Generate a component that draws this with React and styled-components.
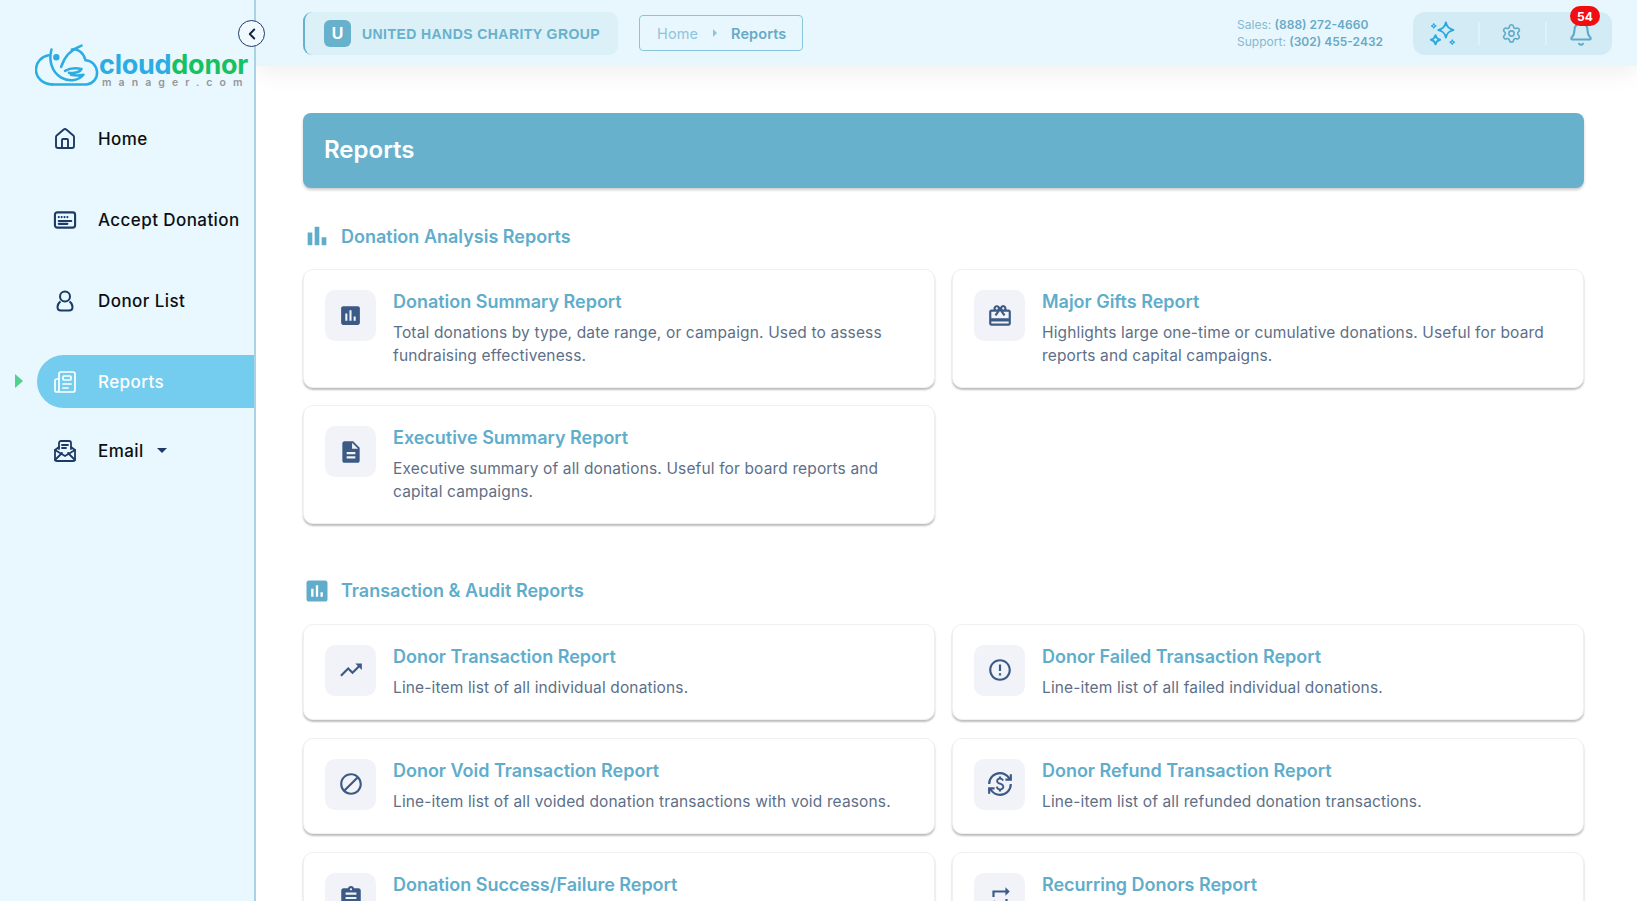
import React from 'react';
import styled, { createGlobalStyle } from 'styled-components';
import { House, Newspaper, ChevronLeft, Settings, Bell } from 'lucide-react';
import {
  MdBarChart,
  MdAssessment,
  MdDescription,
  MdOutlineCardGiftcard,
  MdTrendingUp,
  MdErrorOutline,
  MdBlock,
  MdOutlineCurrencyExchange,
  MdAssignment,
  MdRepeat,
} from 'react-icons/md';

const GlobalStyle = createGlobalStyle`
  html, body {
    margin: 0;
    height: 100%;
    overflow: hidden;
    background: #fff;
    font-family: Inter, "Noto Sans", sans-serif;
  }
  * { box-sizing: border-box; }
`;

const Shell = styled.div`
  display: flex;
  width: 100%;
  height: 901px;
  overflow: hidden;
`;

const Sidebar = styled.aside`
  position: relative;
  flex: 0 0 256px;
  height: 100%;
  padding-top: 44px;
  background: #e8f8fe;
  border-right: 2px solid #a9d2e5;
  z-index: 3;
`;

const Toggle = styled.button`
  position: absolute;
  top: 20px;
  left: 238px;
  width: 27px;
  height: 27px;
  padding: 0;
  display: flex;
  align-items: center;
  justify-content: center;
  color: #14243f;
  background: #f0fafe;
  border: 1.5px solid #1d3a66;
  border-radius: 50%;
`;

const Logo = styled.div`
  display: flex;
  align-items: flex-start;
  height: 44px;
  margin-left: 35px;
`;

const LogoText = styled.div`
  margin: 9px 0 0 0;
`;

const LogoName = styled.div`
  font-size: 27px;
  font-weight: 700;
  line-height: 23px;
  letter-spacing: -0.25px;
  color: #2bace2;

  span {
    color: #17c161;
  }
`;

const LogoSub = styled.div`
  margin: 2px 0 0 3px;
  font-size: 10.5px;
  font-weight: 600;
  line-height: 9px;
  letter-spacing: 7.1px;
  color: #94969c;
`;

const Nav = styled.nav`
  margin-top: 24px;
`;

const NavItem = styled.a`
  position: relative;
  display: flex;
  align-items: center;
  gap: 21px;
  height: 53px;
  margin: ${p => (p.$tight ? '16px' : '28px')} 0 0 37px;
  padding-left: 16px;
  font-size: 17px;
  font-weight: 500;
  letter-spacing: 0.42px;
  color: ${p => (p.$active ? '#fff' : '#0e0e12')};
  background: ${p => (p.$active ? '#74cdef' : 'transparent')};
  border-radius: 27px 0 0 27px;

  &:first-child {
    margin-top: 0;
  }

  svg {
    flex: none;
    color: ${p => (p.$active ? '#fff' : '#1d3a66')};
  }
`;

const ActiveMarker = styled.span`
  position: absolute;
  left: -22px;
  top: 19px;
  border-left: 8px solid #52d18d;
  border-top: 7.5px solid transparent;
  border-bottom: 7.5px solid transparent;
`;

const Caret = styled.span`
  margin-left: -8px;
  border-top: 5px solid #1d3a66;
  border-left: 5px solid transparent;
  border-right: 5px solid transparent;
`;

const Column = styled.div`
  flex: 1;
  min-width: 0;
  display: flex;
  flex-direction: column;
`;

const Header = styled.header`
  position: relative;
  z-index: 2;
  flex: 0 0 66px;
  display: flex;
  align-items: flex-start;
  padding: 12px 25px 0 47px;
  background: #e8f7fd;
  box-shadow: 0 8px 22px rgba(0, 0, 0, 0.06);
`;

const OrgPill = styled.div`
  display: flex;
  align-items: center;
  gap: 11px;
  width: 315px;
  height: 43px;
  padding-left: 19px;
  background: #dbf0f7;
  border-left: 2px solid #68b1cc;
  border-radius: 9px;
`;

const OrgBadge = styled.span`
  width: 27px;
  height: 27px;
  display: flex;
  align-items: center;
  justify-content: center;
  font-family: "Liberation Sans", Arial, sans-serif;
  font-size: 16px;
  font-weight: 700;
  color: #fff;
  background: #68b1cc;
  border-radius: 6px;
`;

const OrgName = styled.span`
  font-family: "Liberation Sans", Arial, sans-serif;
  font-size: 14px;
  font-weight: 700;
  letter-spacing: 0.43px;
  white-space: nowrap;
  color: #68b1cc;
`;

const Crumbs = styled.div`
  display: flex;
  align-items: center;
  width: 164px;
  height: 36px;
  margin: 3px 0 0 21px;
  padding-left: 17px;
  font-size: 14.5px;
  letter-spacing: 0.1px;
  color: #8fc4da;
  border: 1.5px solid #8ac5db;
  border-radius: 4px;
`;

const CrumbArrow = styled.span`
  margin: 0 14px 0 15px;
  border-left: 4px solid #8fc4da;
  border-top: 4px solid transparent;
  border-bottom: 4px solid transparent;
`;

const CrumbCurrent = styled.strong`
  font-weight: 600;
  color: #68a9c6;
`;

const Contact = styled.div`
  margin: 4px 30px 0 auto;
  font-size: 12px;
  line-height: 17px;
  white-space: nowrap;
  color: #86b8d0;

  strong {
    font-weight: 600;
    color: #68a9c6;
  }
`;

const Tools = styled.div`
  position: relative;
  display: grid;
  grid-template-columns: 65px 67px 67px;
  width: 199px;
  height: 43px;
  background: #d2ebf5;
  border-radius: 12px;
`;

const Tool = styled.div`
  display: flex;
  align-items: center;
  justify-content: center;
  padding: ${p => p.$nudge || '0'};
  color: #5fa9cb;
  border-left: ${p => (p.$first ? 'none' : '2px')} solid #def2f9;
  border-image: linear-gradient(transparent 25%, #def2f9 25%, #def2f9 75%, transparent 75%) 1;
`;

const Badge = styled.span`
  position: absolute;
  top: -6px;
  right: 12px;
  width: 30px;
  height: 20px;
  display: flex;
  align-items: center;
  justify-content: center;
  font-size: 12px;
  font-weight: 700;
  color: #fff;
  background: #f20d12;
  border-radius: 10px;
`;

const Content = styled.main`
  padding: 47px 53px 0 47px;
`;

const Banner = styled.div`
  display: flex;
  align-items: center;
  height: 75px;
  padding: 0 0 2px 21px;
  font-size: 24px;
  font-weight: 600;
  color: #fff;
  background: #68b1cc;
  border-radius: 8px;
  box-shadow: 0 2px 3px rgba(0, 0, 0, 0.2);
`;

const SectionTitle = styled.h2`
  display: flex;
  align-items: center;
  gap: 10px;
  height: 24px;
  margin: ${p => (p.$first ? '36px' : '54.5px')} 0 21px;
  font-size: 18px;
  font-weight: 600;
  color: #5fadcb;

  svg {
    flex: none;
  }
`;

const CardGrid = styled.div`
  display: grid;
  grid-template-columns: 1fr 1fr;
  column-gap: 17px;
  row-gap: ${p => (p.$wide ? '17.5px' : '17px')};
`;

const Card = styled.article`
  display: flex;
  gap: 17px;
  padding: 20px 20px 20px 21px;
  background: #fff;
  border: 1px solid #eef0f3;
  border-radius: 10px;
  box-shadow: 0 2px 2px rgba(0, 0, 0, 0.26);
`;

const IconBox = styled.div`
  flex: 0 0 51px;
  height: 51px;
  display: flex;
  align-items: center;
  justify-content: center;
  color: #3b5a85;
  background: #f1f3f8;
  border-radius: 10px;
`;

const CardTitle = styled.h3`
  margin: 0;
  font-size: 18px;
  font-weight: 600;
  line-height: 24px;
  letter-spacing: -0.02px;
  color: #5fadcb;
`;

const CardText = styled.p`
  margin: 8px 0 0;
  font-size: 15.5px;
  font-weight: 400;
  line-height: 22.5px;
  letter-spacing: 0.14px;
  color: #5d6f88;
`;

const Cloud = () => (
  <svg width="64" height="43" viewBox="0 0 66 43" fill="none" stroke="#2bace2" strokeWidth="2.6" strokeLinecap="round" strokeLinejoin="round">
    <path d="M18 41H53a12 12 0 0 0 11-13c-1-7-6-12-12-12C50 8 44 4 38 5" />
    <path d="M18 41C8 41 1 34 1 26c0-8 6-14 13-15" />
    <path d="M17 5c-3 11 0 23 10 29 7 4 17 4 23-3-4 1-9 1-13 0" />
    <path d="M27 23C30 13 37 5 48 1" />
    <path d="M31 27c5-3 11-3 17-2-1 3-7 5-13 4" />
    <circle cx="22" cy="13" r="2" fill="#2bace2" />
  </svg>
);

const CardIcon = () => (
  <svg width="24" height="24" viewBox="0 0 25 24" fill="none" stroke="currentColor" strokeWidth="2.2">
    <rect x="2" y="4" width="21" height="16" rx="2.5" />
    <path d="M6 9h.01M9 9h.01M12 9h.01M15 9h.01M6 13h13M6 16h9" strokeLinecap="round" />
  </svg>
);

const PersonIcon = () => (
  <svg width="24" height="24" viewBox="0 0 24 24" fill="none" stroke="currentColor" strokeWidth="2">
    <ellipse cx="12" cy="7.5" rx="5" ry="5" />
    <path d="M7.5 12.5C5.5 14 4.500 16 4.500 18c0 2 1.500 3.500 3.500 3.500h8c2 0 3.500-1.500 3.500-3.500 0-2-1-4-3-5.500" />
  </svg>
);

const MailIcon = () => (
  <svg width="24" height="24" viewBox="0 0 24 24" fill="none" stroke="currentColor" strokeWidth="1.8" strokeLinejoin="round" strokeLinecap="round">
    <path d="M6 10V4a2 2 0 0 1 2-2h8a2 2 0 0 1 2 2v6" />
    <path d="M9 6h6M9 9h4" />
    <path d="M6 8l-4 3v9a2 2 0 0 0 2 2h16a2 2 0 0 0 2-2v-9l-4-3" />
    <path d="M2 11l10 6 10-6M2 21l7-7M22 21l-7-7" />
  </svg>
);

const SparkleIcon = () => (
  <svg width="30" height="30" viewBox="0 0 26 26" fill="none" stroke="#2ca8dc" strokeWidth="1.7" strokeLinejoin="round">
    <path d="M15.5 3c1 4 2.500 5.500 6.500 6.500-4 1-5.500 2.500-6.500 6.500-1-4-2.500-5.500-6.500-6.500 4-1 5.500-2.500 6.500-6.500z" />
    <path d="M6.5 14c.6 2.600 1.400 3.400 4 4-2.600.6-3.400 1.400-4 4-.6-2.600-1.400-3.400-4-4 2.600-.6 3.400-1.400 4-4z" />
    <path d="M5 4c.3 1.200.8 1.700 2 2-1.200.3-1.700.8-2 2-.3-1.200-.8-1.700-2-2 1.200-.3 1.700-.8 2-2z" strokeWidth="1" />
    <path d="M21 18c.3 1.200.8 1.700 2 2-1.200.3-1.700.8-2 2-.3-1.200-.8-1.700-2-2 1.200-.3 1.700-.8 2-2z" strokeWidth="1" />
  </svg>
);

const analysisReports = [
  {
    title: 'Donation Summary Report',
    text: 'Total donations by type, date range, or campaign. Used to assess fundraising effectiveness.',
    icon: <MdAssessment size={25} />,
  },
  {
    title: 'Major Gifts Report',
    text: 'Highlights large one-time or cumulative donations. Useful for board reports and capital campaigns.',
    icon: <MdOutlineCardGiftcard size={26} />,
  },
  {
    title: 'Executive Summary Report',
    text: 'Executive summary of all donations. Useful for board reports and capital campaigns.',
    icon: <MdDescription size={26} />,
  },
];

const auditReports = [
  {
    title: 'Donor Transaction Report',
    text: 'Line-item list of all individual donations.',
    icon: <MdTrendingUp size={26} />,
  },
  {
    title: 'Donor Failed Transaction Report',
    text: 'Line-item list of all failed individual donations.',
    icon: <MdErrorOutline size={26} />,
  },
  {
    title: 'Donor Void Transaction Report',
    text: 'Line-item list of all voided donation transactions with void reasons.',
    icon: <MdBlock size={26} />,
  },
  {
    title: 'Donor Refund Transaction Report',
    text: 'Line-item list of all refunded donation transactions.',
    icon: <MdOutlineCurrencyExchange size={26} />,
  },
  {
    title: 'Donation Success/Failure Report',
    icon: <MdAssignment size={26} />,
  },
  {
    title: 'Recurring Donors Report',
    icon: <MdRepeat size={26} />,
  },
];

function ReportCard({ report }) {
  return (
    <Card>
      <IconBox>{report.icon}</IconBox>
      <div>
        <CardTitle>{report.title}</CardTitle>
        {report.text && <CardText>{report.text}</CardText>}
      </div>
    </Card>
  );
}

export default function App() {
  return (
    <>
      <GlobalStyle />
      <Shell>
        <Sidebar>
          <Toggle type='button' aria-label='collapse'>
            <ChevronLeft size={18} strokeWidth={2.5} />
          </Toggle>
          <Logo>
            <Cloud />
            <LogoText>
              <LogoName>
                cloud<span>donor</span>
              </LogoName>
              <LogoSub>manager.com</LogoSub>
            </LogoText>
          </Logo>
          <Nav>
            <NavItem>
              <House size={24} strokeWidth={1.9} />
              Home
            </NavItem>
            <NavItem>
              <CardIcon />
              Accept Donation
            </NavItem>
            <NavItem>
              <PersonIcon />
              Donor List
            </NavItem>
            <NavItem $active>
              <ActiveMarker />
              <Newspaper size={24} strokeWidth={1.7} />
              Reports
            </NavItem>
            <NavItem $tight>
              <MailIcon />
              Email
              <Caret />
            </NavItem>
          </Nav>
        </Sidebar>
        <Column>
          <Header>
            <OrgPill>
              <OrgBadge>U</OrgBadge>
              <OrgName>UNITED HANDS CHARITY GROUP</OrgName>
            </OrgPill>
            <Crumbs>
              Home
              <CrumbArrow />
              <CrumbCurrent>Reports</CrumbCurrent>
            </Crumbs>
            <Contact>
              <div>
                Sales: <strong>(888) 272-4660</strong>
              </div>
              <div>
                Support: <strong>(302) 455-2432</strong>
              </div>
            </Contact>
            <Tools>
              <Tool $first $nudge='0 6px 0 0'>
                <SparkleIcon />
              </Tool>
              <Tool $nudge='0 2px 0 0'>
                <Settings size={21} strokeWidth={1.8} />
              </Tool>
              <Tool $nudge='0 0 0 2px'>
                <Bell size={26} strokeWidth={1.9} />
              </Tool>
              <Badge>54</Badge>
            </Tools>
          </Header>
          <Content>
            <Banner>Reports</Banner>
            <SectionTitle $first>
              <MdBarChart size={28} />
              Donation Analysis Reports
            </SectionTitle>
            <CardGrid>
              {analysisReports.map(report => (
                <ReportCard key={report.title} report={report} />
              ))}
            </CardGrid>
            <SectionTitle>
              <MdAssessment size={28} />
              Transaction &amp; Audit Reports
            </SectionTitle>
            <CardGrid $wide>
              {auditReports.map(report => (
                <ReportCard key={report.title} report={report} />
              ))}
            </CardGrid>
          </Content>
        </Column>
      </Shell>
    </>
  );
}
